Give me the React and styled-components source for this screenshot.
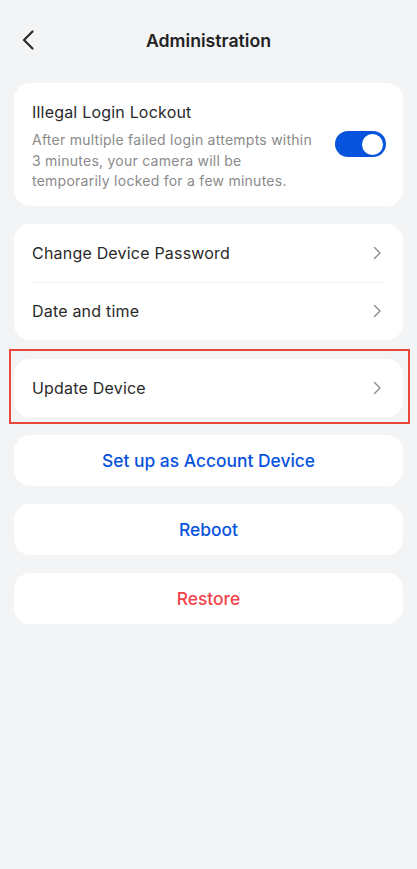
import React, {Component} from 'react';
import styled, {createGlobalStyle} from 'styled-components';

const GlobalStyle = createGlobalStyle`
    html, body {
        margin: 0;
        padding: 0;
        background-color: #f3f4f6;
    }
    body {
        font-family: Inter, "Noto Sans", "Liberation Sans", sans-serif;
        -webkit-font-smoothing: antialiased;
    }
`;

const Page = styled.div`
    min-height: 869px;
    background-color: #f3f4f6;
`;

const Header = styled.div`
    height: 80px;
    display: flex;
    align-items: center;
    justify-content: center;
    position: relative;
    h1 {
        margin: 0;
        font-size: 17.7px;
        font-weight: 600;
        color: #222;
    }
`;

const BackButton = styled.button`
    position: absolute;
    left: 14px;
    top: 24px;
    width: 28px;
    height: 32px;
    padding: 0;
    border: none;
    background: none;
    display: flex;
    align-items: center;
    justify-content: center;
`;

const Content = styled.div`
    padding: 3px 14px 0;
    display: flex;
    flex-direction: column;
    gap: 18px;
`;

const Card = styled.div`
    background-color: #fff;
    border-radius: 16px;
    overflow: hidden;
`;

const LockoutCard = styled(Card)`
    display: flex;
    align-items: flex-start;
    padding: 18px 17px 14px 18px;
    gap: 14px;
`;

const LockoutText = styled.div`
    flex: 1;
    h4 {
        margin: 0 0 7px;
        font-size: 16px;
        font-weight: 400;
        color: #2a2a2a;
        line-height: 22px;
        letter-spacing: 0.2px;
    }
    p {
        margin: 0;
        font-size: 14px;
        line-height: 20.5px;
        color: #8a8a8a;
        letter-spacing: 0.25px;
    }
`;

const Toggle = styled.div`
    width: 51px;
    height: 26px;
    border-radius: 13px;
    background-color: ${props => props.on ? '#0753dd' : '#d8d8d8'};
    margin-top: 30px;
    position: relative;
    flex-shrink: 0;
    &::after {
        content: '';
        position: absolute;
        top: 2.5px;
        left: ${props => props.on ? '27px' : '3px'};
        width: 21px;
        height: 21px;
        border-radius: 50%;
        background-color: #fff;
    }
`;

const Row = styled.div`
    height: 58px;
    display: flex;
    align-items: center;
    justify-content: space-between;
    padding: 0 21px 0 18px;
    font-size: 16px;
    letter-spacing: 0.2px;
    color: #2a2a2a;
    position: relative;
    & + &::before {
        content: '';
        position: absolute;
        top: 0;
        left: 18px;
        right: 17px;
        height: 1px;
        background-color: #f2f2f4;
    }
`;

const Highlight = styled.div`
    margin: -9px -7px -7px -5px;
    padding: 8px 5px 5px 3px;
    border: 2px solid #e8473f;
`;

const ActionButton = styled.button`
    height: 51px;
    border: none;
    border-radius: 16px;
    background-color: #fff;
    font-family: inherit;
    font-size: 17.4px;
    font-weight: 500;
    color: ${props => props.danger ? '#f2444a' : '#0753dd'};
    padding: 0;
`;

const Chevron = () => (
    <svg width="10" height="14" viewBox="0 0 10 14">
        <path d="M2.5 1.5 L8 7 L2.5 12.5" fill="none" stroke="#8a8a8a" strokeWidth="1.4" strokeLinecap="round" strokeLinejoin="round" />
    </svg>
);

export default class App extends Component {
    state = {
        lockout: true
    }

    render() {
        const {lockout} = this.state;
        return (
            <Page>
                <GlobalStyle />
                <Header>
                    <BackButton>
                        <svg width="14" height="20" viewBox="0 0 14 20">
                            <path d="M11.5 1.5 L3 10 L11.5 18.5" fill="none" stroke="#2a2a2a" strokeWidth="2.2" strokeLinecap="round" strokeLinejoin="round" />
                        </svg>
                    </BackButton>
                    <h1>Administration</h1>
                </Header>
                <Content>
                    <LockoutCard>
                        <LockoutText>
                            <h4>Illegal Login Lockout</h4>
                            <p>After multiple failed login attempts within 3 minutes, your camera will be temporarily locked for a few minutes.</p>
                        </LockoutText>
                        <Toggle on={lockout ? 1 : 0} onClick={() => this.setState({lockout: !lockout})} />
                    </LockoutCard>
                    <Card>
                        <Row>Change Device Password <Chevron /></Row>
                        <Row>Date and time <Chevron /></Row>
                    </Card>
                    <Highlight>
                        <Card>
                            <Row>Update Device <Chevron /></Row>
                        </Card>
                    </Highlight>
                    <ActionButton>Set up as Account Device</ActionButton>
                    <ActionButton>Reboot</ActionButton>
                    <ActionButton danger>Restore</ActionButton>
                </Content>
            </Page>
        );
    }
}
